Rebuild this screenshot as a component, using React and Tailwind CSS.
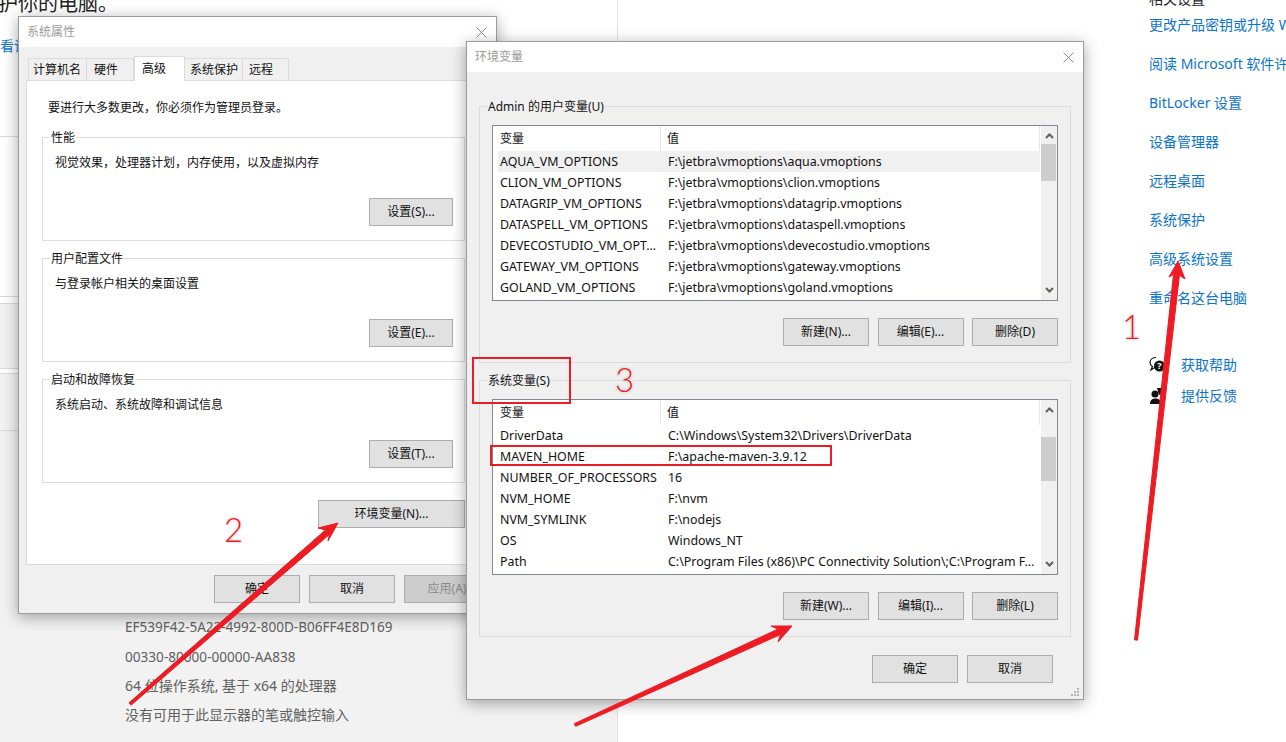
const userVars = [
  ["AQUA_VM_OPTIONS", "F:\\jetbra\\vmoptions\\aqua.vmoptions"],
  ["CLION_VM_OPTIONS", "F:\\jetbra\\vmoptions\\clion.vmoptions"],
  ["DATAGRIP_VM_OPTIONS", "F:\\jetbra\\vmoptions\\datagrip.vmoptions"],
  ["DATASPELL_VM_OPTIONS", "F:\\jetbra\\vmoptions\\dataspell.vmoptions"],
  ["DEVECOSTUDIO_VM_OPT...", "F:\\jetbra\\vmoptions\\devecostudio.vmoptions"],
  ["GATEWAY_VM_OPTIONS", "F:\\jetbra\\vmoptions\\gateway.vmoptions"],
  ["GOLAND_VM_OPTIONS", "F:\\jetbra\\vmoptions\\goland.vmoptions"],
];

const systemVars = [
  ["DriverData", "C:\\Windows\\System32\\Drivers\\DriverData"],
  ["MAVEN_HOME", "F:\\apache-maven-3.9.12"],
  ["NUMBER_OF_PROCESSORS", "16"],
  ["NVM_HOME", "F:\\nvm"],
  ["NVM_SYMLINK", "F:\\nodejs"],
  ["OS", "Windows_NT"],
  ["Path", "C:\\Program Files (x86)\\PC Connectivity Solution\\;C:\\Program F..."],
];

const links = [
  "更改产品密钥或升级 Windows",
  "阅读 Microsoft 软件许可条款",
  "BitLocker 设置",
  "设备管理器",
  "远程桌面",
  "系统保护",
  "高级系统设置",
  "重命名这台电脑",
];

const tabs = [
  { label: "计算机名", cls: "w-[59px] pl-[4px]" },
  { label: "硬件", cls: "w-[47px] pl-[7px]" },
  { label: "高级", cls: "w-[51px] pl-[7px]", active: true },
  { label: "系统保护", cls: "w-[58px] pl-[5px]" },
  { label: "远程", cls: "w-[46px] pl-[6px]" },
];

function Btn({ children, className = "w-[86px]", disabled }) {
  return (
    <div
      className={`flex h-[28px] shrink-0 items-center justify-center border border-[#adadad] ${
        disabled ? "bg-[#cccccc] text-[#8a8a8a]" : "bg-[#e1e1e1] text-[#111]"
      } ${className}`}
    >
      {children}
    </div>
  );
}

function CloseX() {
  return (
    <svg width="11" height="11" viewBox="0 0 11 11" className="shrink-0">
      <path d="M0.5 0.5L10.5 10.5M10.5 0.5L0.5 10.5" stroke="#8c8c8c" strokeWidth="1" fill="none" />
    </svg>
  );
}

function SettingsGroup({ title, text, button }) {
  return (
    <div className="flex h-[104px] flex-col border border-[#dcdcdc]">
      <span className="-mt-[8px] ml-[7px] block w-fit bg-white px-[1px] leading-[16px]">{title}</span>
      <p className="ml-[12px] mt-[9px] leading-[16px]">{text}</p>
      <div className="mt-auto mb-[14px] mr-[11px] flex justify-end">
        <Btn className="w-[84px]">{button}</Btn>
      </div>
    </div>
  );
}

function VarList({ rows, thumbClass, selected }) {
  return (
    <div className="flex h-[176px] border border-[#828790] bg-white">
      <div className="w-[547px] shrink-0">
        <div className="flex h-[25px]">
          <div className="flex w-[168px] items-center border-r border-[#e5e5e5] pl-[7px]">变量</div>
          <div className="flex flex-1 items-center border-r border-[#e5e5e5] pl-[6px]">值</div>
        </div>
        {rows.map(([name, value], i) => (
          <div
            key={name}
            className={`ml-[5px] flex h-[21px] items-center whitespace-nowrap pt-[2px] text-[12.4px] text-[#111] ${
              selected && i === 0 ? "bg-[#f0f0f0]" : ""
            }`}
          >
            <span className="w-[170px] shrink-0 pl-[2px]">{name}</span>
            <span>{value}</span>
          </div>
        ))}
      </div>
      <div className="relative ml-[1px] flex w-[16px] flex-col items-center justify-between bg-[#f0f0f0] py-[7px]">
        <svg width="9" height="6" viewBox="0 0 9 6">
          <path d="M1 5L4.5 1.5L8 5" stroke="#606060" strokeWidth="2" fill="none" />
        </svg>
        <div className={`absolute left-0 w-[15px] bg-[#cdcdcd] ${thumbClass}`} />
        <svg width="9" height="6" viewBox="0 0 9 6">
          <path d="M1 1L4.5 4.5L8 1" stroke="#606060" strokeWidth="2" fill="none" />
        </svg>
      </div>
    </div>
  );
}

function EnvGroup({ title, rows, thumbClass, selected, buttons }) {
  return (
    <div className="h-[257px] border border-[#dcdcdc] px-[12px]">
      <span className="-mt-[8px] -ml-[5px] block w-fit bg-[#f0f0f0] px-[1px] leading-[16px]">{title}</span>
      <div className="mt-[10px]">
        <VarList rows={rows} thumbClass={thumbClass} selected={selected} />
      </div>
      <div className="mt-[17px] flex justify-end gap-[8.5px]">
        {buttons.map((b) => (
          <Btn key={b}>{b}</Btn>
        ))}
      </div>
    </div>
  );
}

function SystemPropsDialog() {
  return (
    <div className="absolute left-[18px] top-[16px] flex h-[598px] w-[479px] flex-col border border-[#9b9b9b] bg-[#f0f0f0] shadow-[0_3px_14px_rgba(0,0,0,0.35)]">
      <div className="flex h-[30px] items-center justify-between bg-white pl-[8px] pr-[9px] text-[#9a9a9a]">
        <span>系统属性</span>
        <CloseX />
      </div>
      <div className="px-[7px] pt-[9px]">
        <div className="relative z-10 ml-[2px] flex h-[24px] items-end">
          {tabs.map((t) =>
            t.active ? (
              <div
                key={t.label}
                className={`-mb-[1px] flex h-[25px] items-start border border-b-0 border-[#dcdcdc] bg-white pt-[3px] ${t.cls}`}
              >
                {t.label}
              </div>
            ) : (
              <div
                key={t.label}
                className={`flex h-[22px] items-center border border-b-0 border-l-0 border-[#dcdcdc] first:border-l ${t.cls}`}
              >
                {t.label}
              </div>
            ),
          )}
        </div>
        <div className="h-[485px] border border-[#dcdcdc] bg-white pl-[15px] pr-[23px]">
          <p className="ml-[6px] mt-[19px] leading-[16px]">要进行大多数更改，你必须作为管理员登录。</p>
          <div className="mt-[21px] flex flex-col gap-[17px]">
            <SettingsGroup title="性能" text="视觉效果，处理器计划，内存使用，以及虚拟内存" button="设置(S)..." />
            <SettingsGroup title="用户配置文件" text="与登录帐户相关的桌面设置" button="设置(E)..." />
            <SettingsGroup title="启动和故障恢复" text="系统启动、系统故障和调试信息" button="设置(T)..." />
          </div>
          <div className="mt-[17px] flex justify-end">
            <Btn className="w-[147px]">环境变量(N)...</Btn>
          </div>
        </div>
        <div className="mt-[10px] flex gap-[9px] pl-[188px]">
          <Btn>确定</Btn>
          <Btn>取消</Btn>
          <Btn disabled>应用(A)</Btn>
        </div>
      </div>
    </div>
  );
}

function EnvVarsDialog() {
  return (
    <div className="absolute left-[466px] top-[41px] flex h-[659px] w-[618px] flex-col border border-[#9b9b9b] bg-[#f0f0f0] shadow-[0_3px_14px_rgba(0,0,0,0.35)]">
      <div className="flex h-[30px] items-center justify-between bg-white pl-[8px] pr-[9px] text-[#9a9a9a]">
        <span>环境变量</span>
        <CloseX />
      </div>
      <div className="relative flex-1 px-[12px] pt-[34px]">
        <div className="flex flex-col gap-[17px]">
          <EnvGroup
            title="Admin 的用户变量(U)"
            rows={userVars}
            thumbClass="top-[18px] h-[37px]"
            selected
            buttons={["新建(N)...", "编辑(E)...", "删除(D)"]}
          />
          <EnvGroup
            title="系统变量(S)"
            rows={systemVars}
            thumbClass="top-[37px] h-[44px]"
            buttons={["新建(W)...", "编辑(I)...", "删除(L)"]}
          />
        </div>
        <div className="mt-[18px] flex justify-end gap-[9px] pr-[18px]">
          <Btn>确定</Btn>
          <Btn>取消</Btn>
        </div>
        <svg width="9" height="9" viewBox="0 0 9 9" className="absolute bottom-[2px] right-[3px]" fill="#b4b4b4">
          <rect x="6" y="0" width="2" height="2" />
          <rect x="3" y="3" width="2" height="2" />
          <rect x="6" y="3" width="2" height="2" />
          <rect x="0" y="6" width="2" height="2" />
          <rect x="3" y="6" width="2" height="2" />
          <rect x="6" y="6" width="2" height="2" />
        </svg>
      </div>
    </div>
  );
}

function SettingsBackground() {
  return (
    <div className="flex h-full">
      <div className="flex w-[618px] shrink-0 flex-col border-r border-[#e2e2e2]">
        <div className="h-[137px] shrink-0 overflow-hidden border-b border-[#d9d9d9] bg-white">
          <p className="-mt-[10px] -ml-[2px] whitespace-nowrap text-[20px] leading-[28px] text-[#222]">护你的电脑。</p>
          <p className="mt-[18px] whitespace-nowrap text-[14px] leading-[20px] text-[#0b74cc]">看详</p>
        </div>
        <div className="h-[160px] shrink-0 border-b border-[#d9d9d9] bg-white" />
        <div className="h-[7px] shrink-0 border-b border-[#d9d9d9] bg-white" />
        <div className="h-[64px] shrink-0 bg-[#f2f2f2]" />
        <div className="h-[6px] shrink-0 border-y border-[#d9d9d9] bg-white" />
        <div className="h-[57px] shrink-0 border-b border-[#d9d9d9] bg-[#f2f2f2]" />
        <div className="flex-1 bg-[#f2f2f2] pl-[125px] pt-[182px] text-[14px] leading-[29px] text-[#606060]">
          <p className="text-[13.5px]">EF539F42-5A22-4992-800D-B06FF4E8D169</p>
          <p className="text-[13.6px]">00330-80000-00000-AA838</p>
          <p>64 位操作系统, 基于 x64 的处理器</p>
          <p>没有可用于此显示器的笔或触控输入</p>
        </div>
      </div>
      <div className="flex-1 overflow-hidden whitespace-nowrap pl-[530px] text-[14px] leading-[20px]">
        <p className="-mt-[11px] ml-px text-[#222]">相关设置</p>
        <div className="ml-px mt-[6px] flex flex-col gap-[19px] text-[#0b74cc]">
          {links.map((l) => (
            <span key={l}>{l}</span>
          ))}
        </div>
        <div className="ml-px mt-[47px] flex items-center gap-[14px] text-[#0b74cc]">
          <svg width="18" height="18" viewBox="0 0 18 18" className="shrink-0">
            <path d="M7 1.500C3.800 1.500 1 3.400 1 6.600c0 1.700 1 3.100 2.400 4L2 14l4.200-2.800" fill="#fff" stroke="#111" strokeWidth="1.200" />
            <circle cx="10.500" cy="10" r="5.500" fill="#111" />
            <text x="10.500" y="13" textAnchor="middle" fontSize="9" fontWeight="700" fill="#fff">?</text>
          </svg>
          <span>获取帮助</span>
        </div>
        <div className="ml-px mt-[11px] flex items-center gap-[14px] text-[#0b74cc]">
          <svg width="18" height="18" viewBox="0 0 18 18" className="shrink-0">
            <circle cx="6" cy="7" r="3.500" fill="#111" />
            <path d="M1 17c0-3.400 1.800-5.500 5.500-5.500s5.500 2.100 5.500 5.500z" fill="#111" />
            <path d="M8 1h7v7l-2.500-1.500L10 8z" fill="#111" />
          </svg>
          <span>提供反馈</span>
        </div>
      </div>
    </div>
  );
}

// tapered hand-drawn arrow, from a thin tail out to a filled head
function arrowPoints(tail, tip, wingA, wingB) {
  const dx = tip[0] - tail[0];
  const dy = tip[1] - tail[1];
  const len = Math.hypot(dx, dy);
  const ux = dx / len;
  const uy = dy / len;
  const nx = -uy;
  const ny = ux;
  const side = (wingA[0] - tip[0]) * nx + (wingA[1] - tip[1]) * ny > 0 ? 1 : -1;
  const neck = [tip[0] - ux * 14, tip[1] - uy * 14];
  const pt = (p, w) => [p[0] + nx * w * side, p[1] + ny * w * side].join(",");
  return [pt(tail, 1.5), pt(neck, 3), wingA.join(","), tip.join(","), wingB.join(","), pt(neck, -3), pt(tail, -1.5)].join(" ");
}

function Annotations() {
  const red = "#ed1c24";
  return (
    <>
      <svg className="absolute inset-0" width="1286" height="742" viewBox="0 0 1286 742">
        <rect x="473" y="358" width="97" height="45" fill="none" stroke={red} strokeWidth="2" />
        <rect x="491" y="446" width="340" height="19" fill="none" stroke={red} strokeWidth="2" />
        <g fill={red} stroke={red} strokeWidth="1" strokeLinejoin="round">
          <polygon points={arrowPoints([1136, 640], [1178, 261], [1169, 277], [1185, 279])} />
          <polygon points={arrowPoints([130, 704], [338, 523], [318, 528], [328, 541])} />
          <polygon points={arrowPoints([575, 725], [792, 626], [771, 626], [778, 642])} />
        </g>
      </svg>
      <span className="absolute left-[1122px] top-[305px] font-['Lato',sans-serif] text-[33px] leading-[42px] font-light text-[#ed1c24] [text-shadow:0_0_2px_#fff,0_0_3px_#aaa]">1</span>
      <span className="absolute left-[224px] top-[508px] font-['Lato',sans-serif] text-[33px] leading-[42px] font-light text-[#ed1c24] [text-shadow:0_0_2px_#fff,0_0_3px_#aaa]">2</span>
      <span className="absolute left-[615px] top-[358px] font-['Lato',sans-serif] text-[33px] leading-[42px] font-light text-[#ed1c24] [text-shadow:0_0_2px_#fff,0_0_3px_#aaa]">3</span>
    </>
  );
}

export default function App() {
  return (
    <div className="relative h-[742px] w-[1286px] overflow-hidden bg-white font-['Noto_Sans','Noto_Sans_CJK_SC',sans-serif] text-[12px] text-[#111]">
      <SettingsBackground />
      <SystemPropsDialog />
      <EnvVarsDialog />
      <Annotations />
    </div>
  );
}
